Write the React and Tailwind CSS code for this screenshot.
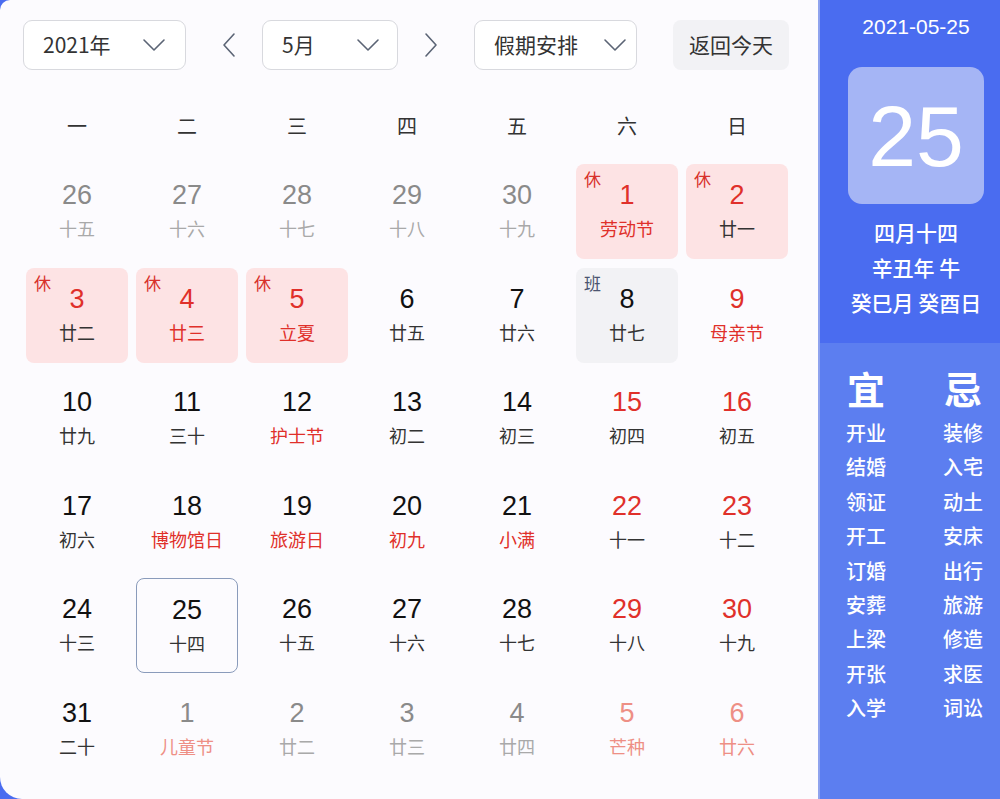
import React from "react";

const FONT = { fontFamily: '"Liberation Sans", "Noto Sans CJK SC", sans-serif' };
const CJK = { fontFamily: '"Noto Sans CJK SC", "Liberation Sans", sans-serif' };

const R = "#e0302a";
const LR = "#ee8f85";

const G = "#8a8a8a";
const GL = "#a9a9a9";
const B = "#111111";
const D = "#333333";

const rows = [
  [
    { n: 26, l: "十五", nc: G, lc: GL },
    { n: 27, l: "十六", nc: G, lc: GL },
    { n: 28, l: "十七", nc: G, lc: GL },
    { n: 29, l: "十八", nc: G, lc: GL },
    { n: 30, l: "十九", nc: G, lc: GL },
    { n: 1, l: "劳动节", nc: R, lc: R, tag: "休", bg: "h" },
    { n: 2, l: "廿一", nc: R, lc: D, tag: "休", bg: "h" },
  ],
  [
    { n: 3, l: "廿二", nc: R, lc: D, tag: "休", bg: "h" },
    { n: 4, l: "廿三", nc: R, lc: R, tag: "休", bg: "h" },
    { n: 5, l: "立夏", nc: R, lc: R, tag: "休", bg: "h" },
    { n: 6, l: "廿五", nc: B, lc: D },
    { n: 7, l: "廿六", nc: B, lc: D },
    { n: 8, l: "廿七", nc: B, lc: D, tag: "班", bg: "w" },
    { n: 9, l: "母亲节", nc: R, lc: R },
  ],
  [
    { n: 10, l: "廿九", nc: B, lc: D },
    { n: 11, l: "三十", nc: B, lc: D },
    { n: 12, l: "护士节", nc: B, lc: R },
    { n: 13, l: "初二", nc: B, lc: D },
    { n: 14, l: "初三", nc: B, lc: D },
    { n: 15, l: "初四", nc: R, lc: D },
    { n: 16, l: "初五", nc: R, lc: D },
  ],
  [
    { n: 17, l: "初六", nc: B, lc: D },
    { n: 18, l: "博物馆日", nc: B, lc: R },
    { n: 19, l: "旅游日", nc: B, lc: R },
    { n: 20, l: "初九", nc: B, lc: R },
    { n: 21, l: "小满", nc: B, lc: R },
    { n: 22, l: "十一", nc: R, lc: D },
    { n: 23, l: "十二", nc: R, lc: D },
  ],
  [
    { n: 24, l: "十三", nc: B, lc: D },
    { n: 25, l: "十四", nc: B, lc: D, today: true },
    { n: 26, l: "十五", nc: B, lc: D },
    { n: 27, l: "十六", nc: B, lc: D },
    { n: 28, l: "十七", nc: B, lc: D },
    { n: 29, l: "十八", nc: R, lc: D },
    { n: 30, l: "十九", nc: R, lc: D },
  ],
  [
    { n: 31, l: "二十", nc: B, lc: D },
    { n: 1, l: "儿童节", nc: G, lc: LR },
    { n: 2, l: "廿二", nc: G, lc: GL },
    { n: 3, l: "廿三", nc: G, lc: GL },
    { n: 4, l: "廿四", nc: G, lc: GL },
    { n: 5, l: "芒种", nc: LR, lc: LR },
    { n: 6, l: "廿六", nc: LR, lc: LR },
  ],
];

const yi = ["开业", "结婚", "领证", "开工", "订婚", "安葬", "上梁", "开张", "入学"];
const ji = ["装修", "入宅", "动土", "安床", "出行", "旅游", "修造", "求医", "词讼"];

function Chevron() {
  return (
    <svg width="24" height="14" viewBox="0 0 24 14" fill="none">
      <polyline points="2,2 12,12 22,2" stroke="#5b6475" strokeWidth="1.6" strokeLinejoin="round" strokeLinecap="round" />
    </svg>
  );
}

function Arrow({ dir }) {
  return (
    <svg width="14" height="26" viewBox="0 0 14 26" fill="none">
      {dir === "left" ? (
        <polyline points="12,2 2,13 12,24" stroke="#5b6475" strokeWidth="1.6" strokeLinejoin="round" strokeLinecap="round" />
      ) : (
        <polyline points="2,2 12,13 2,24" stroke="#5b6475" strokeWidth="1.6" strokeLinejoin="round" strokeLinecap="round" />
      )}
    </svg>
  );
}

function Select({ w, label, chevronPad }) {
  return (
    <div
      className={`h-[50px] ${w} flex items-center justify-between rounded-[9px] border border-[#d8d9de] bg-white pl-[19px] ${chevronPad}`}
    >
      <span className="text-[21px] text-[#333]" style={CJK}>{label}</span>
      <Chevron />
    </div>
  );
}

function Cell({ c }) {
  let bg = "";
  if (c.bg === "h") bg = "bg-[#fde3e4]";
  if (c.bg === "w") bg = "bg-[#f2f2f5]";
  const border = c.today ? "border-[1.5px] border-[#8a9bbb]" : "";
  return (
    <div className={`relative h-[95px] rounded-[8px] ${bg} ${border} flex flex-col items-center`}>
      {c.tag && (
        <span
          className="absolute left-[8px] top-[4px] text-[17px] leading-[22px]"
          style={{ ...CJK, color: c.tag === "休" ? "#d8322c" : "#4b5570" }}
        >
          {c.tag}
        </span>
      )}
      <span
        className="mt-[16px] text-[27px] leading-[30px]"
        style={{ ...FONT, color: c.nc }}
      >
        {c.n}
      </span>
      <span className="mt-[7px] text-[18px] leading-[22px]" style={{ ...CJK, color: c.lc }}>
        {c.l}
      </span>
    </div>
  );
}

export default function App() {
  return (
    <div className="w-[1000px] h-[799px] bg-[#4a6cf0] flex overflow-hidden" style={FONT}>
      {/* main */}
      <div className="w-[818px] h-full bg-[#fcfbfe] rounded-tl-[10px] rounded-bl-[22px] flex flex-col">
        {/* header */}
        <div className="flex items-center pt-[20px] pl-[23px]">
          <Select w="w-[163px]" label="2021年" chevronPad="pr-[19px]" />
          <div className="ml-[36px] w-[14px] flex items-center"><Arrow dir="left" /></div>
          <div className="ml-[26px]">
            <Select w="w-[136px]" label="5月" chevronPad="pr-[17px]" />
          </div>
          <div className="ml-[26px] w-[14px] flex items-center"><Arrow dir="right" /></div>
          <div className="ml-[36px]">
            <Select w="w-[163px]" label="假期安排" chevronPad="pr-[9px]" />
          </div>
          <div className="ml-[36px] h-[50px] w-[116px] rounded-[8px] bg-[#f2f2f5] flex items-center justify-center">
            <span className="text-[21px] text-[#333]" style={CJK}>返回今天</span>
          </div>
        </div>
        {/* weekdays */}
        <div className="mt-[36px] pl-[26px] grid grid-cols-[repeat(7,102px)] gap-x-[8px]">
          {["一", "二", "三", "四", "五", "六", "日"].map((d) => (
            <div key={d} className="h-[40px] flex items-center justify-center text-[20px] text-[#333]" style={CJK}>
              {d}
            </div>
          ))}
        </div>
        {/* grid */}
        <div className="mt-[18px] pl-[26px] grid grid-cols-[repeat(7,102px)] gap-x-[8px] gap-y-[8.5px]">
          {rows.flat().map((c, i) => (
            <Cell key={i} c={c} />
          ))}
        </div>
      </div>
      {/* divider */}
      <div className="w-[2px] h-full bg-[#8fa3ee]" />
      {/* sidebar */}
      <div className="flex-1 h-full flex flex-col text-white">
        <div className="h-[343px] bg-[#4a6cf0] flex flex-col items-center pl-[12px]">
          <div className="mt-[14px] text-[21px] leading-[26px] font-medium" style={FONT}>2021-05-25</div>
          <div className="mt-[27px] w-[136px] h-[137px] rounded-[14px] bg-[#a5b5f5] flex items-center justify-center">
            <span className="text-[86px] leading-none" style={FONT}>25</span>
          </div>
          <div className="mt-[11px] flex flex-col items-center text-[21px] leading-[35px] font-medium" style={CJK}>
            <span>四月十四</span>
            <span>辛丑年 牛</span>
            <span>癸巳月 癸酉日</span>
          </div>
        </div>
        <div className="flex-1 bg-[#5c7ef0] flex justify-between pl-[26px] pr-[17px] pt-[21px]" style={CJK}>
          <div className="flex flex-col items-center">
            <span className="text-[38px] leading-[48px] font-bold">宜</span>
            <div className="mt-[4px] flex flex-col items-center text-[20px] leading-[34.4px] font-medium">
              {yi.map((t) => <span key={t}>{t}</span>)}
            </div>
          </div>
          <div className="flex flex-col items-center">
            <span className="text-[38px] leading-[48px] font-bold">忌</span>
            <div className="mt-[4px] flex flex-col items-center text-[20px] leading-[34.4px] font-medium">
              {ji.map((t) => <span key={t}>{t}</span>)}
            </div>
          </div>
        </div>
      </div>
    </div>
  );
}
